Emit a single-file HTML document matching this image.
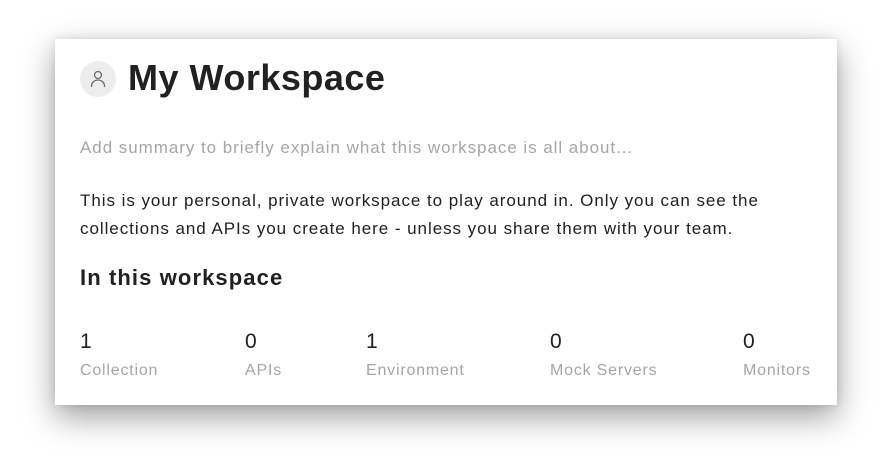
<!DOCTYPE html>
<html><head><meta charset="utf-8"><style>
html,body{margin:0;padding:0;background:#fff;width:892px;height:472px;overflow:hidden;font-family:"Liberation Sans",sans-serif;}
.card{position:absolute;left:55px;top:39px;width:782px;height:366px;background:#fff;box-shadow:0 12px 30px rgba(0,0,0,0.38),0 0 8px rgba(0,0,0,0.1);}
.av{position:absolute;left:25px;top:22px;width:36px;height:36px;border-radius:50%;background:#ededed;}
h1{position:absolute;left:73px;top:17px;margin:0;font-size:36px;font-weight:bold;color:#212121;letter-spacing:0.5px;line-height:44px;}
.sum{position:absolute;left:25px;top:99px;font-size:17px;color:#a6a6a6;letter-spacing:0.95px;}
.desc{position:absolute;left:25px;top:148px;font-size:17px;color:#212121;line-height:28px;width:700px;letter-spacing:0.95px;}
h2{position:absolute;left:25px;top:226px;margin:0;font-size:22px;font-weight:bold;color:#212121;letter-spacing:1.1px;}
.st{position:absolute;top:291px;}
.st .n{font-size:21px;color:#212121;}
.st .l{font-size:16px;color:#a6a6a6;margin-top:8px;letter-spacing:0.8px;}
</style></head><body>
<div class="card">
<div class="av"><svg width="36" height="36" viewBox="0 0 36 36"><circle cx="18" cy="14" r="3.5" fill="none" stroke="#6b6b6b" stroke-width="1.3"/><path d="M11.5 26 v-1 a6.5 6 0 0 1 13 0 v1" fill="none" stroke="#6b6b6b" stroke-width="1.3"/></svg></div>
<h1>My Workspace</h1>
<div class="sum">Add summary to briefly explain what this workspace is all about...</div>
<div class="desc">This is your personal, private workspace to play around in. Only you can see the<br>collections and APIs you create here - unless you share them with your team.</div>
<h2>In this workspace</h2>
<div class="st" style="left:25px"><div class="n">1</div><div class="l">Collection</div></div>
<div class="st" style="left:190px"><div class="n">0</div><div class="l">APIs</div></div>
<div class="st" style="left:311px"><div class="n">1</div><div class="l">Environment</div></div>
<div class="st" style="left:495px"><div class="n">0</div><div class="l">Mock Servers</div></div>
<div class="st" style="left:688px"><div class="n">0</div><div class="l">Monitors</div></div>
</div>
</body></html>
